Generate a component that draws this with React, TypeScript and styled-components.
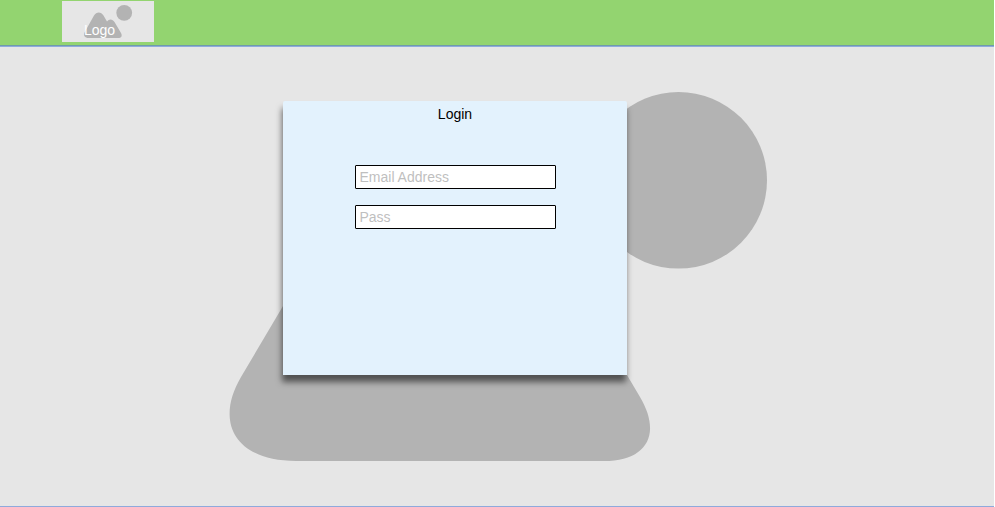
import React from "react";
import styled, { createGlobalStyle } from "styled-components";

const GlobalStyle = createGlobalStyle`
  * { box-sizing: border-box; }
  body {
    margin: 0;
    background: #fff;
    font-family: "Liberation Sans", Arial, sans-serif;
    font-size: 14px;
    overflow: hidden;
  }
`;

const Page = styled.div`
  width: 994px;
  height: 507px;
  display: flex;
  flex-direction: column;
`;

const Header = styled.header`
  height: 47px;
  flex: none;
  padding: 1px 0 0 62px;
  background: #93d470;
  border-bottom: 1px solid #8faadc;
  box-shadow: inset 0 -1px 0 #6f9bab;
`;

const LogoTile = styled.div`
  width: 92px;
  height: 41px;
  display: grid;
  background: #e6e6e6;
`;

const LogoArt = styled.svg`
  grid-area: 1 / 1;
  width: 92px;
  height: 41px;
`;

const LogoLabel = styled.span`
  grid-area: 1 / 1;
  z-index: 1;
  padding: 21px 0 0 22px;
  line-height: 16px;
  color: #fff;
`;

const Hero = styled.main`
  flex: 1;
  display: grid;
  background: #e6e6e6;
  border-bottom: 1px solid #8faadc;
`;

const HeroArt = styled.svg`
  grid-area: 1 / 1;
  width: 994px;
  height: 459px;
`;

const LoginCard = styled.form`
  grid-area: 1 / 1;
  z-index: 1;
  width: 344px;
  height: 274px;
  margin: 54px 0 0 283px;
  padding-top: 5px;
  display: flex;
  flex-direction: column;
  align-items: center;
  background: #e3f2fd;
  border-radius: 2px 2px 0 0;
  box-shadow: -1px 7px 6px rgba(0, 0, 0, 0.55);
`;

const Title = styled.h1`
  margin: 0 0 43px;
  font-size: 14px;
  font-weight: 400;
  line-height: 16px;
  color: #000;
`;

const Field = styled.input`
  width: 201px;
  height: 24px;
  margin: 0 0 16px 1px;
  padding: 0 3.5px;
  border: 1px solid #000;
  border-radius: 1px;
  background: #fff;
  font: 14px "Liberation Sans", Arial, sans-serif;
  outline: none;
  &::placeholder { color: #bfbfbf; opacity: 1; }
`;

export default function App() {
  return (
    <>
      <GlobalStyle />
      <Page>
        <Header>
          <LogoTile>
            <LogoArt viewBox="62 1 92 41" fill="#b3b3b3" aria-hidden="true">
              <circle cx="124.2" cy="12.8" r="7.9" />
              <path d="M89 38C84.5 38 83 35.500 84.800 32L94 15.500C96.500 11.500 101 11.500 103.500 15.500L107 21.500C109 18.700 112.500 18.700 114.500 22L121 33C122.500 36 121.500 38 118 38Z" />
            </LogoArt>
            <LogoLabel>Logo</LogoLabel>
          </LogoTile>
        </Header>
        <Hero>
          <HeroArt viewBox="0 47 994 459" fill="#b3b3b3" aria-hidden="true">
            <ellipse cx="678.500" cy="180.300" rx="88.500" ry="88.300" />
            <path d="M296 461C236 461 214 423 241 377L283 306L350 200H520L627 375L640 397C662 434 647 461 604 461Z" />
          </HeroArt>
          <LoginCard>
            <Title>Login</Title>
            <Field type="email" placeholder="Email Address" aria-label="Email Address" />
            <Field type="password" placeholder="Pass" aria-label="Password" />
          </LoginCard>
        </Hero>
      </Page>
    </>
  );
}
